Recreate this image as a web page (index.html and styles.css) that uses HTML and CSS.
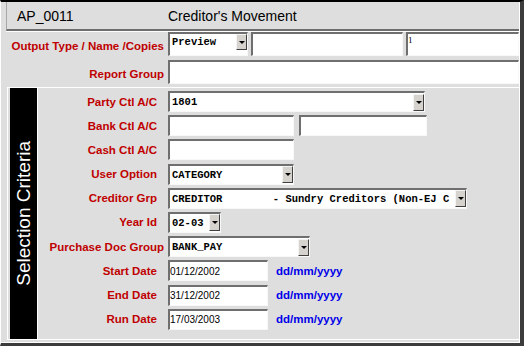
FILE: index.html
```html
<!DOCTYPE html>
<html>
	<head>
		<title>Creditor's Movement</title>
		<link rel="stylesheet" href="styles.css">
	</head>
	<body>
		<div class="frame">
			<div class="inner">
				<div class="titlebar">
					<span class="code">AP_0011</span>
					<span class="title">Creditor's Movement</span>
				</div>

				<div class="head">
					<div class="hrow">
						<label class="lbl">Output Type / Name /Copies</label>
						<div class="field w-preview">
							<span class="val mono">Preview</span><span class="drop short"></span>
						</div>
						<div class="field w-name"></div>
						<div class="field w-copies"><span class="val serif">1</span></div>
					</div>
					<div class="hrow">
						<label class="lbl">Report Group</label>
						<div class="field w-report"></div>
					</div>
				</div>

				<div class="criteria">
					<div class="side"><span>Selection Criteria</span></div>
					<div class="rows">
						<div class="row">
							<label class="lbl">Party Ctl A/C</label>
							<div class="field w-party"><span class="val mono">1801</span><span class="drop"></span></div>
						</div>
						<div class="row">
							<label class="lbl">Bank Ctl A/C</label>
							<div class="field w-small"></div>
							<div class="field w-bank2"></div>
						</div>
						<div class="row">
							<label class="lbl">Cash Ctl A/C</label>
							<div class="field w-small"></div>
						</div>
						<div class="row">
							<label class="lbl">User Option</label>
							<div class="field w-small"><span class="val mono">CATEGORY</span><span class="drop"></span></div>
						</div>
						<div class="row">
							<label class="lbl">Creditor Grp</label>
							<div class="field w-creditor"><span class="val mono">CREDITOR        - Sundry Creditors (Non-EJ C</span><span class="drop"></span></div>
						</div>
						<div class="row">
							<label class="lbl">Year Id</label>
							<div class="field w-year"><span class="val mono">02-03</span><span class="drop"></span></div>
						</div>
						<div class="row">
							<label class="lbl tight">Purchase Doc Group</label>
							<div class="field w-purchase"><span class="val mono">BANK_PAY</span><span class="drop"></span></div>
						</div>
						<div class="row">
							<label class="lbl">Start Date</label>
							<div class="field w-date"><span class="val date">01/12/2002</span></div>
							<span class="hint">dd/mm/yyyy</span>
						</div>
						<div class="row">
							<label class="lbl">End Date</label>
							<div class="field w-date"><span class="val date">31/12/2002</span></div>
							<span class="hint">dd/mm/yyyy</span>
						</div>
						<div class="row">
							<label class="lbl">Run Date</label>
							<div class="field w-date"><span class="val date">17/03/2003</span></div>
							<span class="hint">dd/mm/yyyy</span>
						</div>
					</div>
				</div>
			</div>
		</div>
	</body>
</html>
```

FILE: styles.css
```css
body {
	margin: 0;
	font-family: "Liberation Sans", Arial, sans-serif;
	background: #dedede;
}
.frame {
	width: 524px;
	height: 346px;
	box-sizing: border-box;
	background: #dedede;
	border-top: 2px solid #000;
	border-left: 1px solid #fff;
	border-right: 4px solid #3c3c3c;
	border-bottom: 3px solid #3c3c3c;
}
.inner {
	height: 100%;
	box-sizing: border-box;
	border-right: 1px solid #fff;
	border-bottom: 1px solid #fff;
}

/* title bar */
.titlebar {
	margin-left: 5px;
	height: 27px;
	display: flex;
	align-items: center;
	border-left: 1px solid #a8a8a8;
	border-bottom: 2px solid #6e6e6e;
	box-shadow: 0 1px 0 #fff;
	font-size: 14px;
	color: #000;
}
.code {
	flex: 0 0 161px;
	box-sizing: border-box;
	padding-left: 10px;
}

/* labels */
.lbl {
	display: flex;
	align-items: center;
	justify-content: flex-end;
	box-sizing: border-box;
	white-space: nowrap;
	color: #c00000;
	font-weight: bold;
	font-size: 11.5px;
}

/* header rows */
.head {
	margin-top: 1px;
	display: flex;
	flex-direction: column;
	gap: 4px;
}
.hrow {
	display: flex;
	height: 24px;
}
.hrow > .lbl {
	width: 167px;
	padding: 3px 4px 0 0;
}
.hrow .field {
	height: 24px;
	align-items: flex-start;
	margin-right: 3px;
}
.hrow .field:last-child {
	margin-right: 0;
}

/* fields */
.field {
	box-sizing: border-box;
	display: flex;
	align-items: center;
	overflow: hidden;
	background: #fff;
	border-top: 2px solid #6f6f6f;
	border-left: 2px solid #6f6f6f;
	border-right: 1px solid #f8f8f8;
	border-bottom: 1px solid #f8f8f8;
}
.val {
	flex: 1;
	min-width: 0;
	overflow: hidden;
	white-space: pre;
	padding-left: 2px;
	color: #000;
}
.mono {
	font-family: "Liberation Mono", "Courier New", monospace;
	font-weight: bold;
	font-size: 10.5px;
}
.hrow .mono {
	padding-top: 2px;
	line-height: 12px;
}
.serif {
	font-family: "Liberation Serif", "Times New Roman", serif;
	font-size: 9px;
	line-height: 10px;
	padding: 1px 0 0 0;
}
.date {
	font-size: 10px;
	padding-left: 0;
}
.drop {
	flex: 0 0 11px;
	height: 17px;
	box-sizing: border-box;
	display: flex;
	align-items: center;
	justify-content: center;
	background: #d6d3ce;
	border-top: 1px solid #f4f4f4;
	border-left: 1px solid #f4f4f4;
	border-right: 1px solid #404040;
	border-bottom: 1px solid #404040;
}
.drop.short {
	height: 16px;
}
.drop::after {
	content: "";
	border-left: 3px solid transparent;
	border-right: 3px solid transparent;
	border-top: 3px solid #000;
}

.w-preview { width: 80px; }
.w-name { width: 152px; }
.w-copies { width: 113px; }
.w-report { width: 351px; }
.w-party { width: 257px; }
.w-small { width: 126px; }
.w-bank2 { width: 128px; margin-left: 5px; }
.w-creditor { width: 299px; }
.w-year { width: 53px; }
.w-purchase { width: 142px; }
.w-date { width: 100px; }

/* selection criteria */
.criteria {
	margin: 3px 0 0 6px;
	height: 253px;
	box-sizing: border-box;
	display: flex;
	border-top: 1px solid #fff;
	border-left: 1px solid #fff;
	border-bottom: 1px solid #fff;
}
.side {
	width: 27px;
	margin-left: 2px;
	background: #000;
	border-right: 1px solid #fff;
	display: flex;
	align-items: center;
	justify-content: center;
}
.side span {
	writing-mode: vertical-rl;
	transform: rotate(180deg);
	white-space: nowrap;
	color: #fff;
	font-size: 19px;
}
.rows {
	padding-top: 3px;
	display: flex;
	flex-direction: column;
	gap: 3.2px;
}
.row {
	display: flex;
	align-items: center;
	height: 21px;
}
.row > .lbl {
	width: 130px;
	padding-right: 11px;
}
.row > .lbl.tight {
	padding-right: 4px;
}
.row .field {
	height: 21px;
}
.hint {
	margin-left: 8px;
	color: #0000e8;
	font-weight: bold;
	font-size: 11.5px;
}
```
